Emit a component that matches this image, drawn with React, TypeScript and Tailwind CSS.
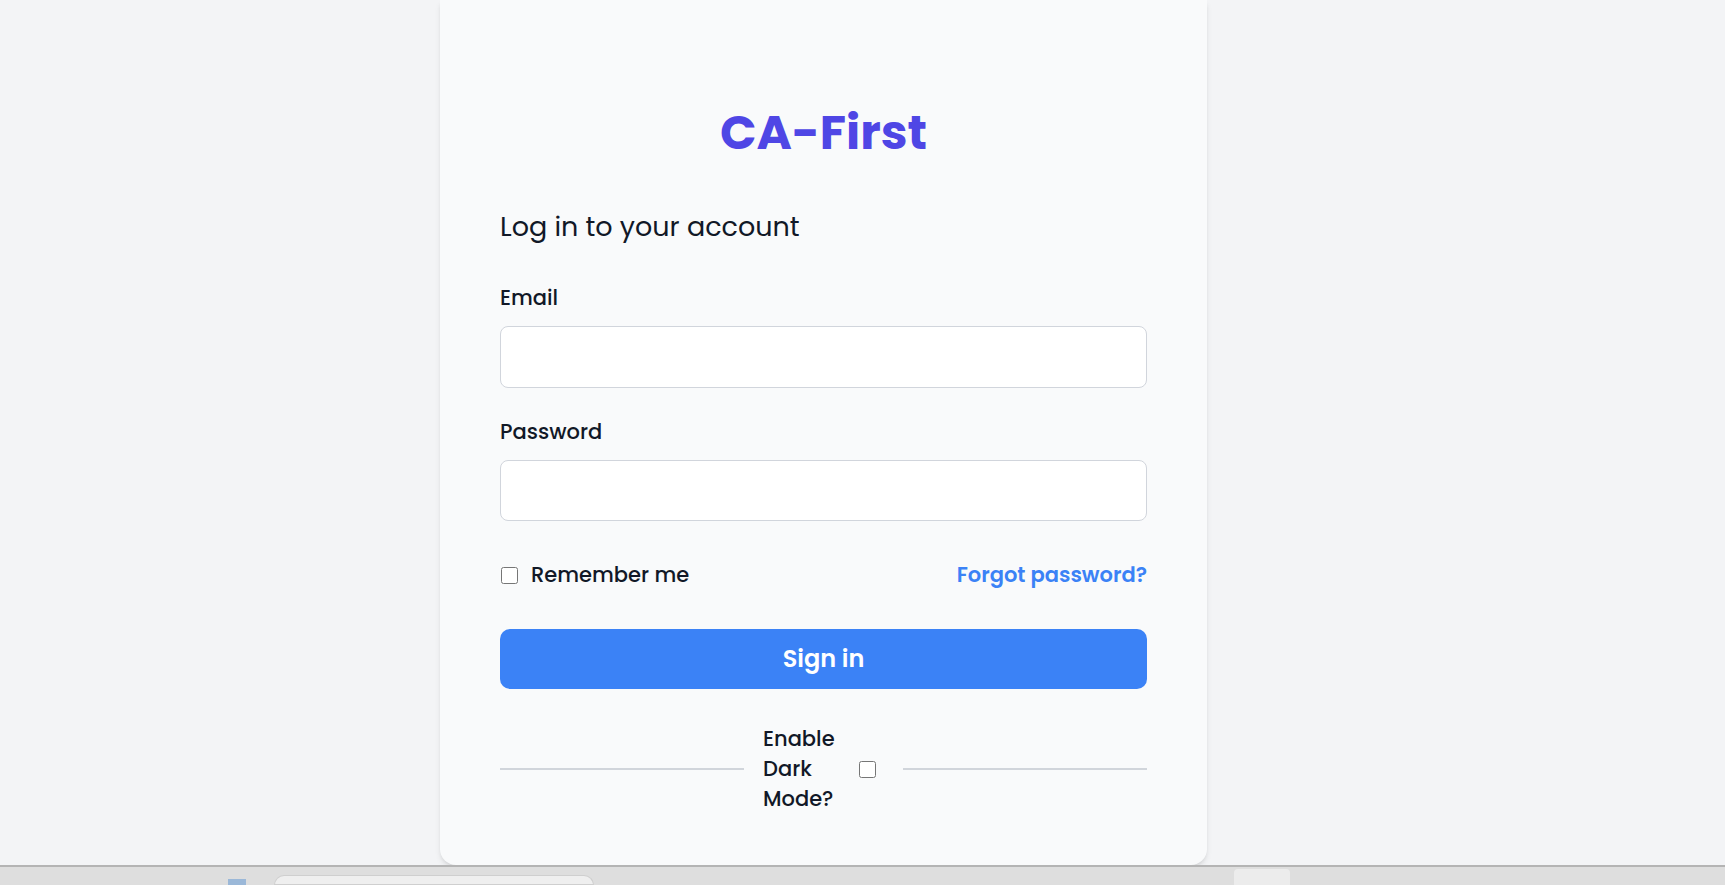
import React from 'react';

const font = { fontFamily: 'Poppins, "Open Sans", "Noto Sans", sans-serif' };

const App: React.FC = () => {
  return (
    <div className="h-screen flex flex-col bg-gray-100 overflow-hidden" style={font}>
      {/* ===== PAGE ===== */}
      <div className="flex-1 min-h-0 overflow-hidden">
        <div className="ml-[440px] w-[767px] bg-gray-50 rounded-b-2xl shadow-md px-[60px] pt-[109px] pb-[51px] text-[#111827]">
          <h1 className="text-center text-5xl leading-[48px] font-bold text-[#4f46e5]">CA-First</h1>

          <h2 className="mt-[54px] text-[27px] leading-8 font-normal">Log in to your account</h2>

          {/* Email */}
          <label className="block mt-[41px] text-[21px] leading-7 font-medium">Email</label>
          <input
            type="email"
            className="mt-[14px] block w-full h-[62px] bg-white border border-gray-300 rounded-lg px-3 outline-none"
          />

          {/* Password */}
          <label className="block mt-[30px] text-[21px] leading-7 font-medium">Password</label>
          <input
            type="password"
            className="mt-[14px] block w-full h-[61px] bg-white border border-gray-300 rounded-lg px-3 outline-none"
          />

          {/* Remember / forgot */}
          <div className="mt-[40px] flex items-center justify-between h-7">
            <label className="flex items-center gap-[13px] text-[21px] font-medium">
              <input type="checkbox" className="w-[17px] h-[17px] ml-[1px]" />
              Remember me
            </label>
            <a className="text-[21px] font-semibold text-[#3b82f6]">Forgot password?</a>
          </div>

          <button className="mt-[40px] w-full h-[60px] rounded-[10px] bg-[#3b82f6] text-white text-2xl font-semibold">
            Sign in
          </button>

          {/* Dark mode divider */}
          <div className="mt-[35px] flex items-center">
            <div className="flex-1 h-[2px] bg-[#d1d5db]" />
            <div className="flex items-center pl-[19px] pr-[27px]">
              <span className="w-[82px] text-[21px] leading-[30px] font-medium">Enable Dark Mode?</span>
              <input type="checkbox" className="w-[17px] h-[17px] ml-[14px]" />
            </div>
            <div className="flex-1 h-[2px] bg-[#d1d5db]" />
          </div>
        </div>
      </div>

      {/* ===== OS TASKBAR (screenshot edge) ===== */}
      <div className="h-[20px] shrink-0 border-t-2 border-[#b4b4b4] bg-[#dedede] flex items-end">
        <div className="ml-[228px] w-[18px] h-[6px] bg-[#9bb8d8]" />
        <div className="ml-[28px] w-[320px] h-[10px] bg-[#efefef] rounded-t-xl border border-[#cfcfcf]" />
        <div className="ml-[640px] w-[56px] h-[16px] bg-[#ececec] rounded-t" />
      </div>
    </div>
  );
};

export default App;
